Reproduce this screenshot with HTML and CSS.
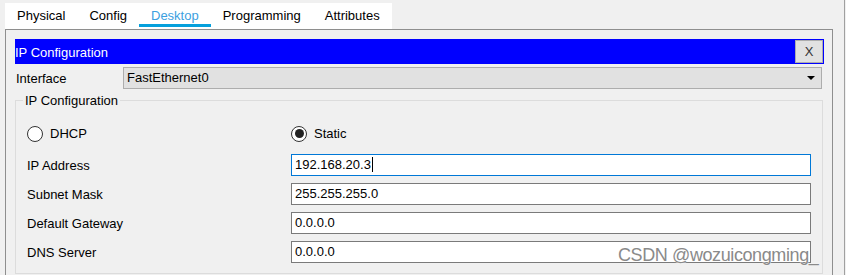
FILE: index.html
```html
<!DOCTYPE html>
<html lang="en">
<head>
    <meta charset="UTF-8">
    <meta name="viewport" content="width=device-width, initial-scale=1.0">
    <title>Desktop - IP Configuration</title>
    <link rel="stylesheet" href="styles.css">
</head>
<body>
    <div class="window">
        <div class="tabs">
            <span class="tab">Physical</span>
            <span class="tab">Config</span>
            <span class="tab active">Desktop</span>
            <span class="tab">Programming</span>
            <span class="tab">Attributes</span>
        </div>

        <div class="panel">
            <div class="title-bar">
                <span class="title-text">IP Configuration</span>
                <button class="close-btn">X</button>
            </div>

            <div class="interface-row">
                <span class="interface-label">Interface</span>
                <div class="select">
                    FastEthernet0
                    <span class="select-arrow"></span>
                </div>
            </div>

            <fieldset class="ip-config">
                <legend>IP Configuration</legend>
                <div class="config-grid">
                    <label class="radio"><span class="radio-circle"></span>DHCP</label>
                    <label class="radio"><span class="radio-circle checked"></span>Static</label>

                    <span class="field-label">IP Address</span>
                    <div class="field focused">192.168.20.3<span class="caret"></span></div>

                    <span class="field-label">Subnet Mask</span>
                    <div class="field">255.255.255.0</div>

                    <span class="field-label">Default Gateway</span>
                    <div class="field">0.0.0.0</div>

                    <span class="field-label">DNS Server</span>
                    <div class="field">0.0.0.0</div>
                </div>
            </fieldset>
        </div>

        <div class="watermark">CSDN @wozuicongming_</div>
    </div>
</body>
</html>
```

FILE: styles.css
```css
* {
    margin: 0;
    padding: 0;
    box-sizing: border-box;
    font-family: 'Liberation Sans', Arial, sans-serif;
}

body {
    background: #f0f0f0;
    color: #000;
    font-size: 13px;
}

.window {
    position: relative;
    width: 845px;
    min-height: 100vh;
    border-right: 1px solid #a0a0a0;
}

/* tabs */
.tabs {
    display: inline-flex;
    margin: 3px 0 0 5px;
    height: 26px;
    background: #fff;
}

.tab {
    padding: 5px 12px 0;
    height: 24px;
    line-height: 16px;
    border-bottom: 3px solid transparent;
}

.tab.active {
    color: #3c9fdf;
    border-bottom-color: #06a0dc;
}

/* main panel */
.panel {
    margin-left: 5px;
    width: 828px;
    border: 1px solid #8e8e8e;
    border-bottom: none;
    padding: 9px 8px 10px 9px;
}

.title-bar {
    display: flex;
    justify-content: space-between;
    align-items: center;
    height: 25px;
    padding: 1px;
    background: #0000ff;
}

.title-text {
    color: #fff;
    margin-left: -1px;
    padding-top: 2px;
}

.close-btn {
    width: 28px;
    height: 23px;
    background: #e1e1e1;
    border: 1px solid #adadad;
    font-size: 13px;
    color: #333;
    font-family: 'Liberation Sans', Arial, sans-serif;
}

.interface-row {
    display: flex;
    align-items: center;
    margin-top: 3px;
}

.interface-label {
    width: 108px;
    padding-left: 1px;
}

.select {
    position: relative;
    width: 699px;
    height: 22px;
    line-height: 20px;
    padding-left: 3px;
    background: #e1e1e1;
    border: 1px solid #adadad;
}

.select-arrow {
    position: absolute;
    right: 6px;
    top: 8px;
    border-left: 4px solid transparent;
    border-right: 4px solid transparent;
    border-top: 4px solid #000;
}

/* ip configuration group */
.ip-config {
    margin-top: 4px;
    width: 808px;
    border: 1px solid #dcdcdc;
    padding: 0 11px 10px 11px;
}

.ip-config legend {
    margin-left: -4px;
    padding: 0 2px;
    font-size: 13px;
}

.config-grid {
    display: grid;
    grid-template-columns: 264px 1fr;
    grid-template-rows: 26px repeat(4, 22px);
    row-gap: 7px;
    padding-top: 13px;
}

.radio {
    display: flex;
    align-items: center;
    gap: 7px;
    padding-bottom: 1px;
}

.radio-circle {
    width: 16px;
    height: 16px;
    border: 1px solid #333;
    border-radius: 50%;
    background: #fff;
    display: flex;
    align-items: center;
    justify-content: center;
}

.radio-circle.checked::after {
    content: "";
    width: 9px;
    height: 9px;
    border-radius: 50%;
    background: #222;
}

.field-label {
    display: flex;
    align-items: center;
}

.field {
    height: 22px;
    line-height: 20px;
    padding-left: 3px;
    background: #fff;
    border: 1px solid #7a7a7a;
}

.field.focused {
    border-color: #0078d7;
}

.caret {
    display: inline-block;
    width: 1px;
    height: 15px;
    margin-left: 1px;
    vertical-align: -3px;
    background: #000;
}

.watermark {
    position: absolute;
    left: 618px;
    top: 245px;
    font-size: 18px;
    letter-spacing: -0.4px;
    color: #8a8a8a;
    text-shadow: 0 0 1px #fff, 0 0 1px #fff;
}
```
